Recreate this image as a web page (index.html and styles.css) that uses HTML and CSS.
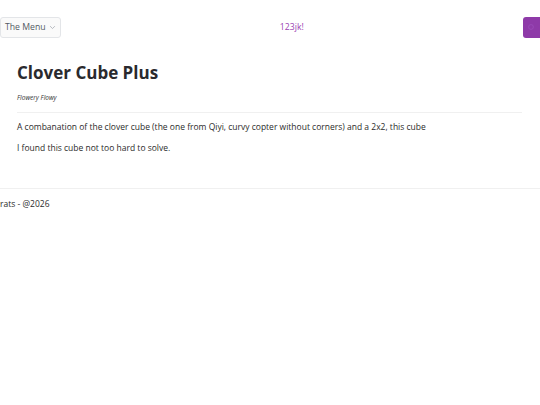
FILE: index.html
```html
<!DOCTYPE html>
<html lang="en">
<head>
<meta charset="utf-8">
<title>Clover Cube Plus</title>
<link rel="stylesheet" href="styles.css">
</head>
<body>
<header class="topbar">
  <button class="menu-btn" type="button">The Menu
    <svg class="chev" viewBox="0 0 10 10" width="7" height="7"><path d="M2 3.5 L5 6.5 L8 3.5" fill="none" stroke="#a3a8b0" stroke-width="1.1" stroke-linecap="round" stroke-linejoin="round"/></svg>
  </button>
  <a class="brand" href="#">123jk!</a>
  <button class="theme-btn" type="button" aria-label="Toggle theme">
    <svg viewBox="0 0 10 10" width="8" height="8"><circle cx="5" cy="5" r="3" fill="none" stroke="#9a4cba" stroke-width="1"/></svg>
  </button>
</header>
<main class="content">
  <h1 class="title">Clover Cube Plus</h1>
  <p class="author">Flowery Flowy</p>
  <hr class="rule">
  <p class="text">A combanation of the clover cube (the one from Qiyi, curvy copter without corners) and a 2x2, this cube</p>
  <p class="text">I found this cube not too hard to solve.</p>
</main>
<footer class="footer">
  <p class="footer-text">rats - @2026</p>
</footer>
</body>
</html>
```
FILE: styles.css
```css
html, body {
  margin: 0;
  padding: 0;
  background: #ffffff;
  font-family: "Open Sans", "Noto Sans", sans-serif;
  color: #2b2b2b;
}
.topbar {
  display: flex;
  align-items: center;
  justify-content: space-between;
  padding: 17px 0 0 0;
  height: 20px;
}
.menu-btn {
  display: flex;
  align-items: center;
  gap: 3px;
  height: 21px;
  padding: 0 4px 0 4px;
  background: #fafafa;
  border: 1px solid #e3e5e8;
  border-radius: 3px;
  font-family: "Open Sans", "Noto Sans", sans-serif;
  font-size: 8.7px;
  color: #555b63;
}
.brand {
  color: #9b3fb3;
  font-size: 8.7px;
  text-decoration: none;
}
.theme-btn {
  width: 17px;
  height: 21px;
  padding: 0;
  border: none;
  border-radius: 3px 0 0 3px;
  background: #8e3aa8;
  display: flex;
  align-items: center;
  justify-content: center;
}
.content {
  padding: 24px 18px 24px 17px;
}
.title {
  margin: 0;
  font-size: 17px;
  font-weight: 700;
  line-height: 24px;
  color: #2a2a2e;
}
.author {
  margin: 7.5px 0 0 0;
  font-size: 6.5px;
  font-style: italic;
  color: #333;
  line-height: 10px;
}
.rule {
  border: none;
  border-top: 1px solid #f0f0f0;
  margin: 9px 0 9.5px 0;
}
.text {
  margin: 0 0 11px 0;
  font-size: 8.5px;
  line-height: 10px;
  color: #2b2b2b;
}
.footer {
  border-top: 1px solid #f0f0f0;
  padding: 9px 0;
}
.footer-text {
  margin: 0;
  font-size: 8.5px;
  line-height: 12px;
  color: #2b2b2b;
}
```
